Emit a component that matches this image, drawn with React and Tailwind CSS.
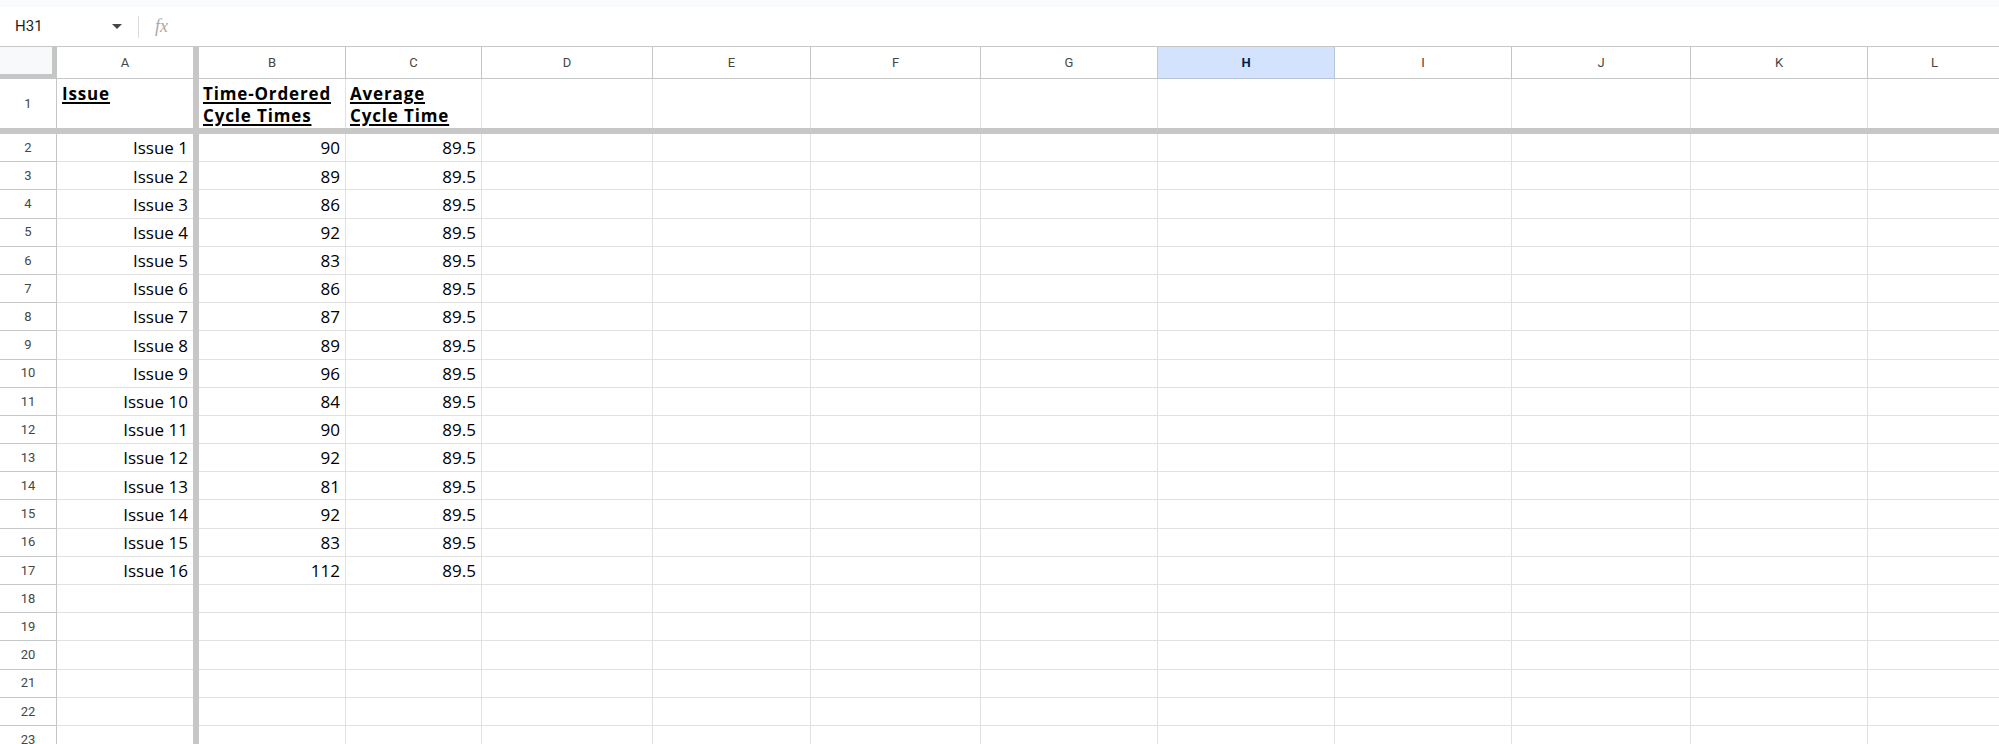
import React from "react";

const times = [90, 89, 86, 92, 83, 86, 87, 89, 96, 84, 90, 92, 81, 92, 83, 112];

const rightCols = [
  { l: "B", w: "w-[147px]" },
  { l: "C", w: "w-[136px]" },
  { l: "D", w: "w-[171px]" },
  { l: "E", w: "w-[158px]" },
  { l: "F", w: "w-[170px]" },
  { l: "G", w: "w-[177px]" },
  { l: "H", w: "w-[177px]" },
  { l: "I", w: "w-[177px]" },
  { l: "J", w: "w-[179px]" },
  { l: "K", w: "w-[177px]" },
  { l: "L", w: "w-[134px]" },
  { l: "", w: "w-[177px]" },
];

const cellFont = { fontFamily: '"Open Sans", "Liberation Sans", sans-serif' };
const headFont = { fontFamily: 'Roboto, "Liberation Sans", Arial, sans-serif' };

function Divider() {
  return <div className="w-[6px] shrink-0 self-stretch bg-[#c7c7c7]" />;
}

function ColumnHeaderRow() {
  return (
    <div className="flex h-[32px] shrink-0" style={headFont}>
      <div className="w-[57px] shrink-0 bg-[#f8f9fa] border-r-[5px] border-b-[5px] border-[#c4c7c5]" />
      <div className="w-[136px] shrink-0 flex items-center justify-center border-b border-[#c4c7c5] text-[13px] text-[#444746]">
        A
      </div>
      <Divider />
      {rightCols.map((c, i) => (
        <div
          key={i}
          className={`${c.w} shrink-0 flex items-center justify-center border-r border-b text-[13px] ${
            c.l === "H"
              ? "bg-[#d3e3fd] border-[#b9c4d6] font-bold text-[#041e49]"
              : "border-[#c4c7c5] text-[#444746]"
          }`}
        >
          {c.l}
        </div>
      ))}
    </div>
  );
}

function RowNum({ n, className = "" }) {
  return (
    <div
      className={`w-[57px] shrink-0 flex items-center justify-center border-r border-[#c4c7c5] text-[13px] text-[#444746] ${className}`}
      style={headFont}
    >
      {n}
    </div>
  );
}

function HeaderTitle({ children }) {
  return (
    <span className="font-bold underline decoration-2 underline-offset-[2px] tracking-[0.05em] text-black">
      {children}
    </span>
  );
}

function TitleRow() {
  return (
    <div className="flex h-[49px] shrink-0" style={cellFont}>
      <RowNum n={1} />
      <div className="w-[136px] shrink-0 pl-[5px] pt-[4px] text-[17px] leading-[22px]">
        <HeaderTitle>Issue</HeaderTitle>
      </div>
      <Divider />
      {rightCols.map((c, i) => (
        <div
          key={i}
          className={`${c.w} shrink-0 border-r border-[#e1e1e1] pl-[4px] pt-[4px] text-[17px] leading-[22px] whitespace-nowrap`}
        >
          {c.l === "B" && (
            <>
              <HeaderTitle>Time-Ordered</HeaderTitle>
              <br />
              <HeaderTitle>Cycle Times</HeaderTitle>
            </>
          )}
          {c.l === "C" && (
            <>
              <HeaderTitle>Average</HeaderTitle>
              <br />
              <HeaderTitle>Cycle Time</HeaderTitle>
            </>
          )}
        </div>
      ))}
    </div>
  );
}

function DataRow({ n }) {
  const idx = n - 2;
  const has = idx >= 0 && idx < times.length;
  return (
    <div className="flex h-[28.2px] shrink-0" style={cellFont}>
      <RowNum n={n} className="border-b border-b-[#c4c7c5]" />
      <div className="w-[136px] shrink-0 flex items-center justify-end pr-[5px] pt-[1px] border-b border-[#e1e1e1] text-[17px] text-black">
        {has ? `Issue ${idx + 1}` : ""}
      </div>
      <Divider />
      {rightCols.map((c, i) => (
        <div
          key={i}
          className={`${c.w} shrink-0 flex items-center justify-end pr-[5px] pt-[1px] border-r border-b border-[#e1e1e1] text-[17px] text-black`}
        >
          {has && c.l === "B" ? times[idx] : ""}
          {has && c.l === "C" ? "89.5" : ""}
        </div>
      ))}
    </div>
  );
}

export default function App() {
  const rows = [];
  for (let n = 2; n <= 23; n++) rows.push(n);
  return (
    <div className="w-[1999px] h-[744px] overflow-hidden bg-white flex flex-col">
      <div className="h-[7px] shrink-0 bg-[#f9fbfd]" />
      <div
        className="h-[40px] shrink-0 flex items-center border-b border-[#c4c7c5] bg-white"
        style={headFont}
      >
        <div className="w-[107px] pl-[15px] text-[15px] text-[#1f1f1f]">H31</div>
        <svg width="10" height="5" viewBox="0 0 10 5" className="ml-[5px]">
          <path d="M0 0 L10 0 L5 5 Z" fill="#444746" />
        </svg>
        <div className="ml-[16px] w-px h-[22px] bg-[#dadce0]" />
        <div
          className="ml-[16px] text-[18px] italic text-[#a8a8a8]"
          style={{ fontFamily: '"Liberation Serif", serif' }}
        >
          fx
        </div>
      </div>
      <ColumnHeaderRow />
      <TitleRow />
      <div className="h-[6px] shrink-0 bg-[#c7c7c7]" />
      {rows.map((n) => (
        <DataRow key={n} n={n} />
      ))}
    </div>
  );
}
